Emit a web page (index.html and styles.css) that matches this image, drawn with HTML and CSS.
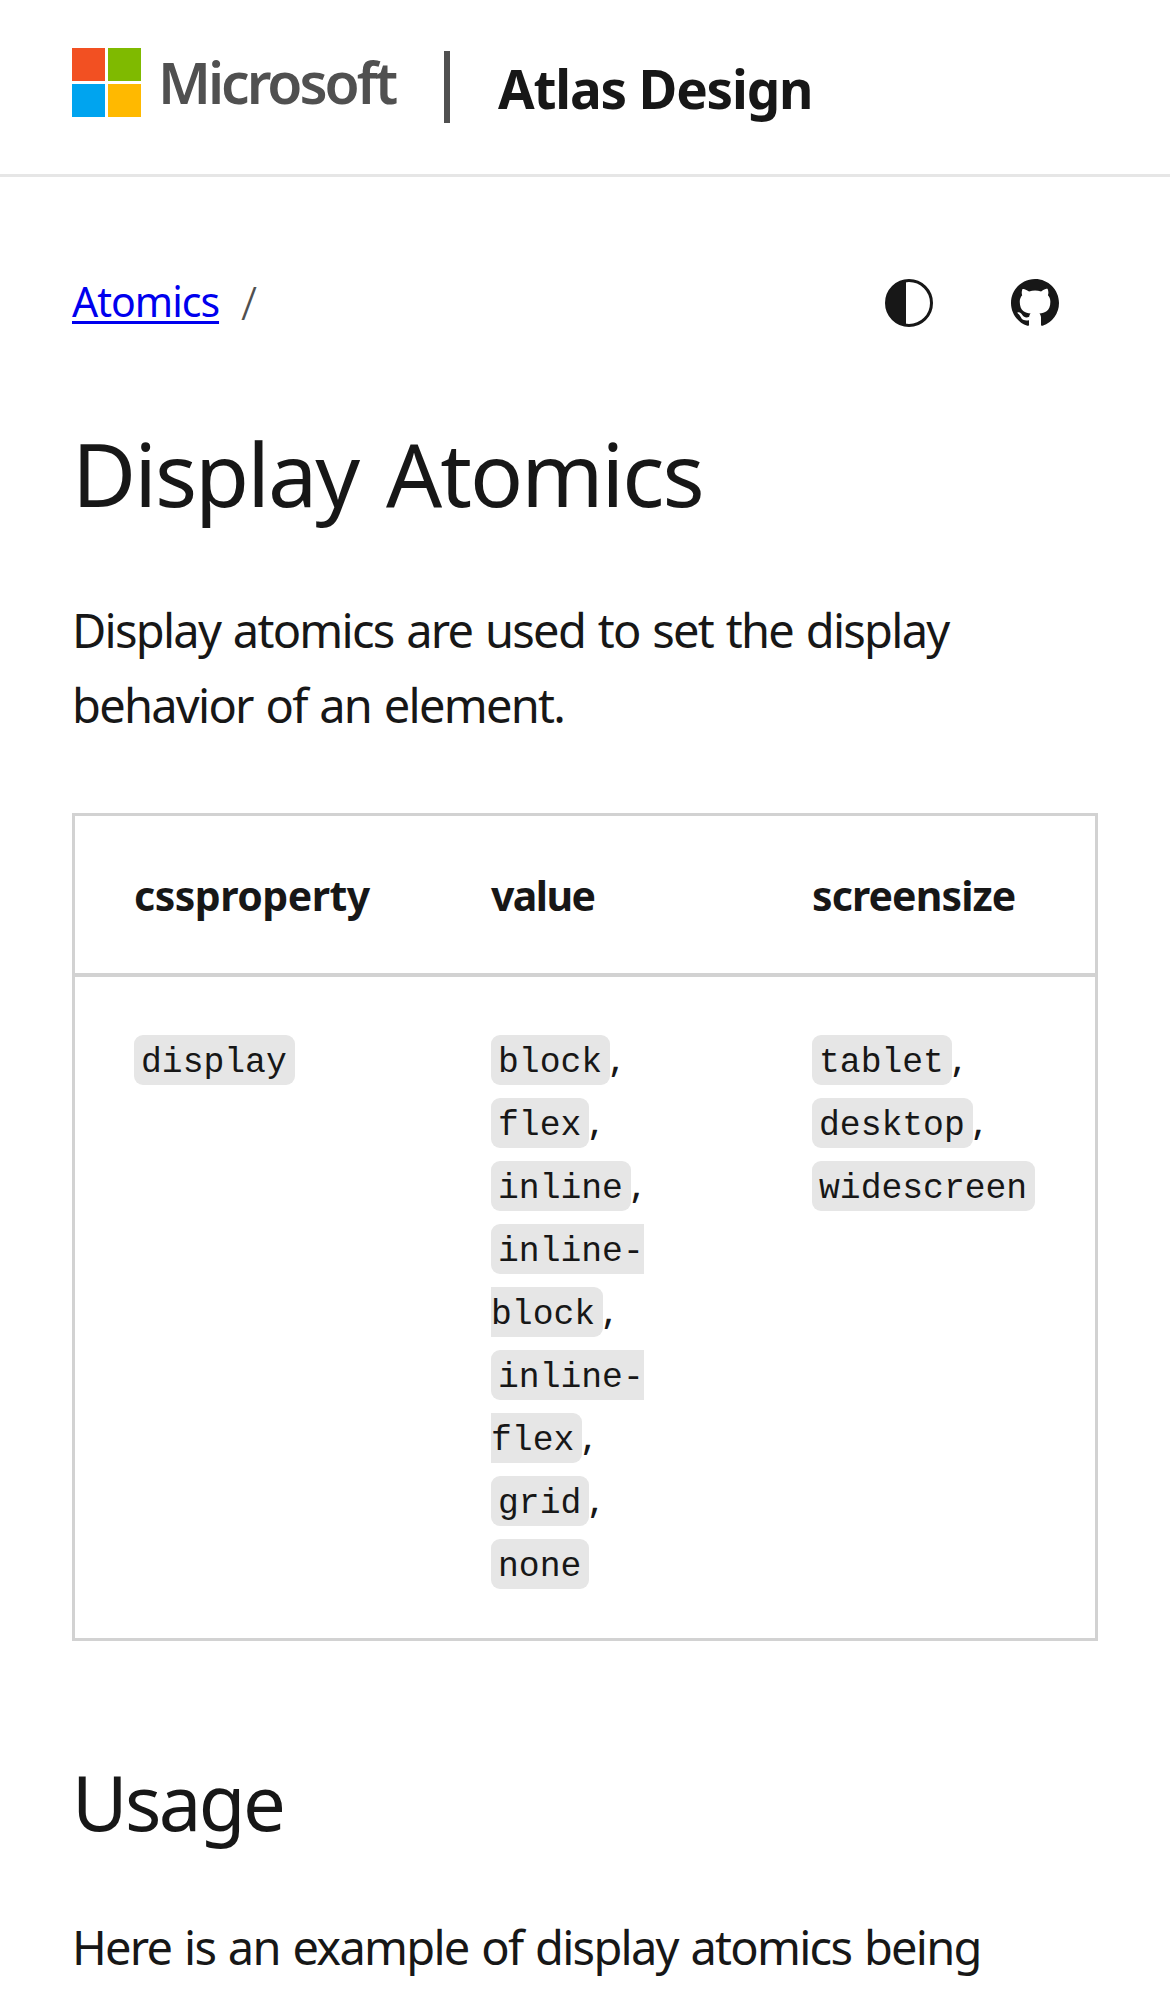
FILE: index.html
```
<!DOCTYPE html>
<html lang="en">
<head>
<meta charset="utf-8">
<title>Display Atomics - Atlas Design</title>
<link rel="stylesheet" href="styles.css">
</head>
<body>
<header class="site-header">
  <a class="brand" href="#">
    <svg class="brand-mark" viewBox="0 0 69 69" aria-hidden="true">
      <path fill="#f25022" d="M0 0h33v33H0z"/>
      <path fill="#7fba00" d="M36 0h33v33H36z"/>
      <path fill="#00a4ef" d="M0 36h33v33H0z"/>
      <path fill="#ffb900" d="M36 36h33v33H36z"/>
    </svg>
    <span class="brand-name">Microsoft</span>
  </a>
  <span class="divider"></span>
  <a class="site-name" href="#">Atlas Design</a>
</header>
<main class="page">
  <div class="toolbar">
    <nav class="breadcrumb"><a class="crumb" href="#">Atomics</a><span class="slash">/</span></nav>
    <div class="actions">
      <svg class="icon" viewBox="0 0 48 48" aria-label="Theme">
        <circle cx="24" cy="24" r="22.5" fill="none" stroke="#171717" stroke-width="3"/>
        <path fill="#171717" d="M21 1.7v44.6A22.5 22.5 0 0 1 21 1.7z"/>
      </svg>
      <svg class="icon" viewBox="0 0 16 16" aria-label="GitHub">
        <path fill="#171717" d="M8 0C3.58 0 0 3.58 0 8c0 3.54 2.29 6.53 5.47 7.59.4.07.55-.17.55-.38 0-.19-.01-.82-.01-1.49-2.01.37-2.53-.49-2.69-.94-.09-.23-.48-.94-.82-1.13-.28-.15-.68-.52-.01-.53.63-.01 1.08.58 1.23.82.72 1.21 1.87.87 2.33.66.07-.52.28-.87.51-1.07-1.78-.2-3.64-.89-3.64-3.95 0-.87.31-1.59.82-2.15-.08-.2-.36-1.02.08-2.12 0 0 .67-.21 2.2.82.64-.18 1.32-.27 2-.27s1.36.09 2 .27c1.53-1.04 2.2-.82 2.2-.82.44 1.1.16 1.92.08 2.12.51.56.82 1.27.82 2.15 0 3.07-1.87 3.75-3.65 3.95.29.25.54.73.54 1.48 0 1.07-.01 1.93-.01 2.2 0 .21.15.46.55.38A8.01 8.01 0 0 0 16 8c0-4.42-3.58-8-8-8z"/>
      </svg>
    </div>
  </div>
  <h1 class="title">Display Atomics</h1>
  <p class="text">Display atomics are used to set the display behavior of an element.</p>
  <table class="table">
    <colgroup><col class="col-property"><col class="col-value"><col class="col-screen"></colgroup>
    <thead>
      <tr><th>cssproperty</th><th class="th-value">value</th><th class="th-screen">screensize</th></tr>
    </thead>
    <tbody>
      <tr>
        <td><code>display</code></td>
        <td><code>block</code>, <code>flex</code>, <code>inline</code>, <code>inline-block</code>, <code>inline-flex</code>, <code>grid</code>, <code>none</code></td>
        <td><code>tablet</code>, <code>desktop</code>, <code>widescreen</code></td>
      </tr>
    </tbody>
  </table>
  <h2 class="subtitle">Usage</h2>
  <p class="text text-usage">Here is an example of display atomics being</p>
</main>
</body>
</html>
```

FILE: styles.css
```
* {
  box-sizing: border-box;
}

body {
  margin: 0;
  background: #fff;
  color: #171717;
  font-family: "Noto Sans", sans-serif;
}

.site-header {
  display: flex;
  align-items: flex-start;
  height: 177px;
  padding: 48px 72px 0;
  border-bottom: 3px solid #e6e6e6;
}

.brand {
  display: flex;
  gap: 17px;
  width: 372px;
  color: #505050;
  text-decoration: none;
}

.brand-mark {
  flex: none;
  width: 69px;
  height: 69px;
}

.brand-name {
  font-size: 57px;
  font-weight: 600;
  line-height: 68px;
  letter-spacing: -3px;
}

.divider {
  width: 6px;
  height: 72px;
  margin-top: 3px;
  background: #505050;
}

.site-name {
  margin-left: 48px;
  color: #171717;
  font-size: 53px;
  font-weight: 700;
  line-height: 81px;
  letter-spacing: -1.18px;
  text-decoration: none;
}

.page {
  padding: 0 72px;
}

.toolbar {
  display: flex;
  justify-content: space-between;
  align-items: center;
  height: 63px;
  margin-top: 93px;
  padding-right: 39px;
}

.breadcrumb {
  display: flex;
  gap: 22px;
  font-size: 41px;
  line-height: 63px;
}

.crumb {
  color: #00e;
  letter-spacing: -1px;
  text-decoration-thickness: 3px;
  text-underline-offset: 4px;
}

.slash {
  height: 63px;
  padding-top: 1px;
  color: #505050;
  font-size: 46px;
  font-weight: 300;
}

.actions {
  display: flex;
  gap: 78px;
  padding-top: 3px;
}

.icon {
  width: 48px;
  height: 48px;
}

.title {
  margin: 82px 0 0;
  font-size: 88px;
  font-weight: 400;
  line-height: 117px;
  letter-spacing: -2px;
  word-spacing: 7px;
}

.text {
  margin: 61px 0 70px;
  font-size: 47px;
  line-height: 75px;
  letter-spacing: -1.74px;
  word-spacing: 2.2px;
}

.table {
  width: 1026px;
  height: 828px;
  border: 3px solid #d2d2d2;
  border-spacing: 0;
  table-layout: fixed;
}

.col-property {
  width: 357px;
}

.col-value {
  width: 321px;
}

.col-screen {
  width: 342px;
}

th {
  padding: 48px 40px 46px 59px;
  border-bottom: 4px solid #d2d2d2;
  font-size: 41px;
  font-weight: 700;
  line-height: 63px;
  letter-spacing: -0.5px;
  text-align: left;
}

.th-value {
  letter-spacing: -1.6px;
}

.th-screen {
  letter-spacing: -0.9px;
}

td {
  padding: 48px 50px 46px 59px;
  font-size: 41px;
  line-height: 63px;
  letter-spacing: -1px;
  vertical-align: top;
}

code {
  padding: 8px 8px 3px 7px;
  border-radius: 9px;
  background: #e6e6e6;
  font-family: "Liberation Mono", monospace;
  font-size: 34.7px;
  line-height: 0;
  letter-spacing: 0;
}

.subtitle {
  margin: 111px 0 0;
  font-size: 76px;
  font-weight: 400;
  line-height: 100px;
  letter-spacing: -2.6px;
}

.text-usage {
  margin: 58px 0 0;
}
```
